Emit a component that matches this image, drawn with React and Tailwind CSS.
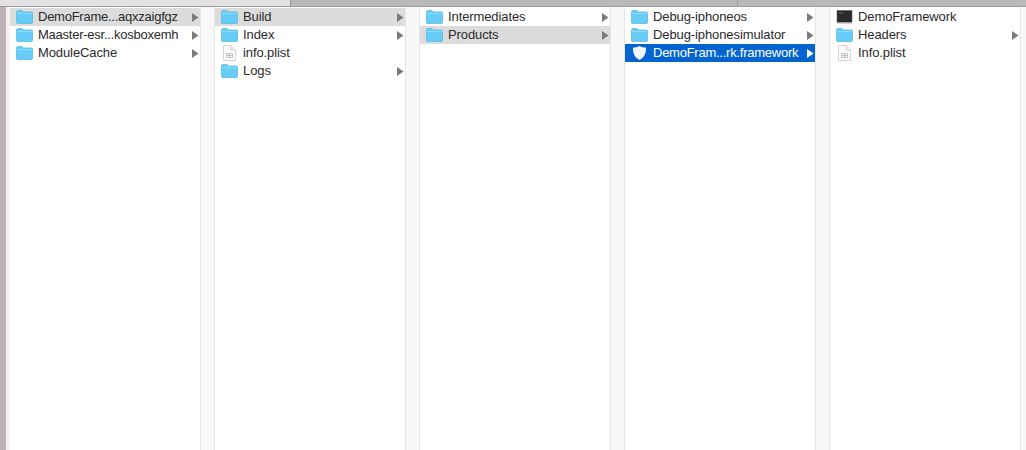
import React from 'react';

const FolderIcon = () => (
    <svg width="17" height="14" viewBox="0 0 17 14" className="shrink-0">
        <path d="M0.5 2 Q0.5 0.5 2 0.5 H6 L7.5 2 H15.5 Q16.5 2 16.5 3 V12.5 Q16.5 13.5 15.5 13.5 H1.5 Q0.5 13.5 0.5 12.5 Z" fill="#68cdf6" stroke="#4fb6e4" strokeWidth="0.7" />
        <path d="M1 3.6 H16" stroke="#9be0f9" strokeWidth="0.8" />
    </svg>
);

const PlistIcon = () => (
    <svg width="17" height="16" viewBox="0 0 17 16" className="shrink-0">
        <path d="M2.5 0.5 H10 L14.5 5 V15.5 H2.5 Z" fill="#fdfdfd" stroke="#c9c9c9" strokeWidth="0.8" />
        <path d="M10 0.5 V5 H14.5" fill="#efefef" stroke="#c9c9c9" strokeWidth="0.8" />
        <path d="M5.5 8.5 H11.5 V12.5 H5.5 Z M5.5 10.5 H11.5 M8.5 8.5 V12.5" fill="none" stroke="#b5b5b5" strokeWidth="0.8" />
    </svg>
);

const ShieldIcon = () => (
    <svg width="17" height="16" viewBox="0 0 17 16" className="shrink-0">
        <path d="M8.5 1 C10.5 2.2 12.8 2.6 15 2.6 C15.2 8.5 13 13 8.5 15 C4 13 1.8 8.5 2 2.6 C4.2 2.6 6.5 2.2 8.5 1 Z" fill="#f4f6f9" />
    </svg>
);

const ExecIcon = () => (
    <svg width="17" height="14" viewBox="0 0 17 14" className="shrink-0">
        <rect x="1" y="0.5" width="15" height="12" fill="#2a2a2a" stroke="#555" strokeWidth="0.5" />
        <rect x="1" y="12" width="15" height="1.5" fill="#a5a5a5" />
        <path d="M3 3 H7" stroke="#5a8f6a" strokeWidth="0.8" />
    </svg>
);

const icons = { folder: FolderIcon, plist: PlistIcon, shield: ShieldIcon, exec: ExecIcon };

const columns = [
    [
        { name: 'DemoFrame...aqxzaigfgz', icon: 'folder', arrow: true, state: 'open', tight: true },
        { name: 'Maaster-esr...kosboxemh', icon: 'folder', arrow: true, tight: true },
        { name: 'ModuleCache', icon: 'folder', arrow: true },
    ],
    [
        { name: 'Build', icon: 'folder', arrow: true, state: 'open' },
        { name: 'Index', icon: 'folder', arrow: true },
        { name: 'info.plist', icon: 'plist' },
        { name: 'Logs', icon: 'folder', arrow: true },
    ],
    [
        { name: 'Intermediates', icon: 'folder', arrow: true },
        { name: 'Products', icon: 'folder', arrow: true, state: 'open' },
    ],
    [
        { name: 'Debug-iphoneos', icon: 'folder', arrow: true },
        { name: 'Debug-iphonesimulator', icon: 'folder', arrow: true },
        { name: 'DemoFram...rk.framework', icon: 'shield', arrow: true, state: 'selected', tight: true },
    ],
    [
        { name: 'DemoFramework', icon: 'exec' },
        { name: 'Headers', icon: 'folder', arrow: true },
        { name: 'Info.plist', icon: 'plist' },
    ],
];

const Row = ({ row }) => {
    const Icon = icons[row.icon];
    const selected = row.state === 'selected';
    return (
        <div className={`h-[18px] flex items-center pl-[6px] pr-[1px] ${selected ? 'bg-[#0464cf] text-white' : row.state === 'open' ? 'bg-[#dcdcdc] text-[#2b2b2b]' : 'text-[#2b2b2b]'}`}>
            <Icon />
            <span className={`ml-[5px] flex-1 text-[13px] whitespace-nowrap ${row.tight ? 'tracking-[-0.25px]' : 'tracking-[-0.1px]'}`}>{row.name}</span>
            {row.arrow && (
                <svg width="8" height="9" viewBox="0 0 8 9" className="shrink-0">
                    <path d="M1 0 L7.5 4.5 L1 9 Z" fill={selected ? '#ffffff' : '#7a7a7a'} />
                </svg>
            )}
        </div>
    );
};

const App = () => {
    return (
        <div className="w-[1026px] h-[450px] overflow-hidden flex flex-col bg-[#f9f9f9] font-['Liberation_Sans',sans-serif]">
            <div className="h-[7px] shrink-0 flex border-b border-[#9c9c9c]">
                <div className="w-[291px] bg-[#e3e1e1] border-r border-[#8f8f8f]" />
                <div className="w-[447px] bg-[#b9b9b9] border-r border-[#9a9a9a]" />
                <div className="flex-1 bg-[#b9b9b9]" />
            </div>
            <div className="flex-1 flex min-h-0">
                <div className="w-[6px] bg-[#bab2b2] shrink-0" />
                <div className="w-[4px] bg-[#f4f2f2] shrink-0" />
                {columns.map((rows, i) => (
                    <div key={i} className="flex shrink-0">
                        <div className="w-[190px] bg-white pt-px">
                            {rows.map((row) => (
                                <Row key={row.name} row={row} />
                            ))}
                        </div>
                        <div className="w-[15px] bg-[#f8f8f8] border-x border-[#e6e6e6]" />
                    </div>
                ))}
            </div>
        </div>
    );
};

export default App;
